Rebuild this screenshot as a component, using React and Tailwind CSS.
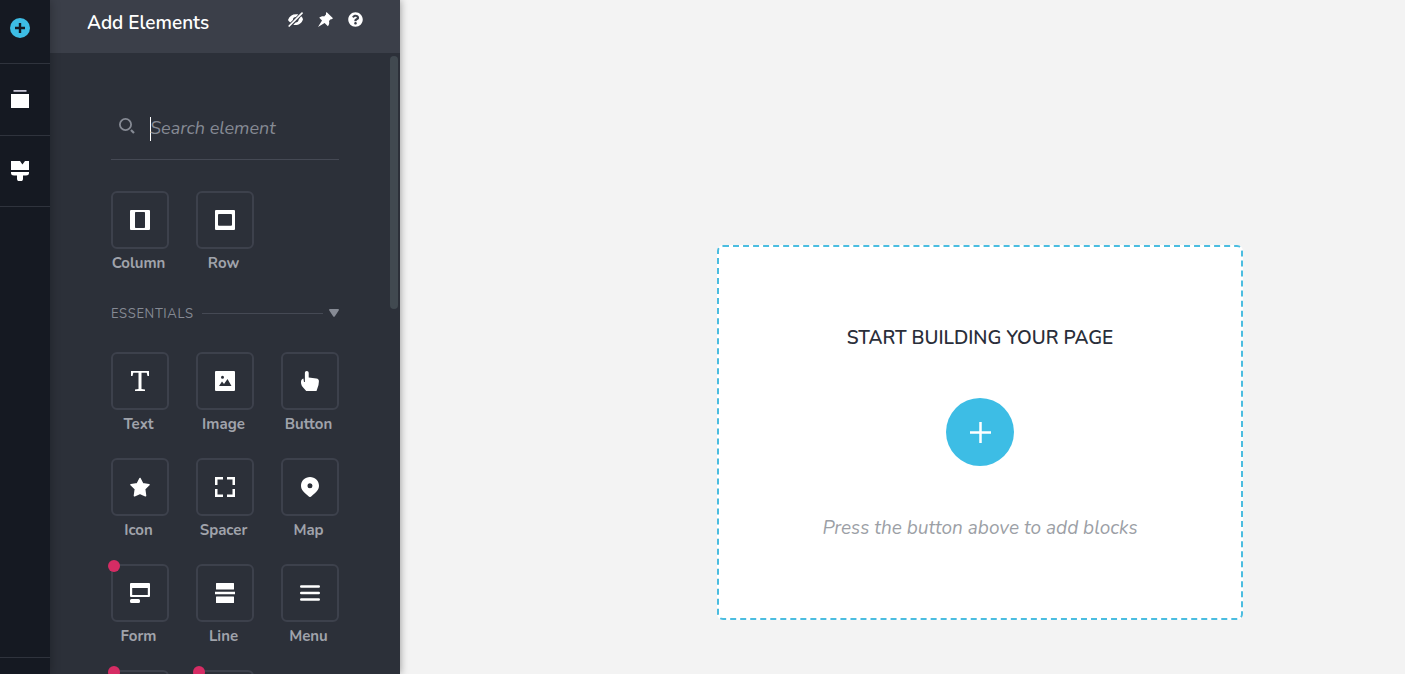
import React from 'react';
import { FaQuestionCircle } from 'react-icons/fa';

const icons = {
  column: (
    <path
      fillRule="evenodd"
      d="M1 0h18a1 1 0 0 1 1 1v18a1 1 0 0 1-1 1H1a1 1 0 0 1-1-1V1a1 1 0 0 1 1-1zm4.800 2a.8.8 0 0 0-.8.8v14.400a.8.8 0 0 0 .8.8h8.400a.8.8 0 0 0 .8-.8V2.800a.8.8 0 0 0-.8-.8z"
    />
  ),
  row: (
    <path
      fillRule="evenodd"
      d="M1 0h18a1 1 0 0 1 1 1v18a1 1 0 0 1-1 1H1a1 1 0 0 1-1-1V1a1 1 0 0 1 1-1zm3 4a1 1 0 0 0-1 1v9.800a1 1 0 0 0 1 1h12a1 1 0 0 0 1-1V5a1 1 0 0 0-1-1z"
    />
  ),
  text: (
    <path d="M1 0h18v5h-1.500l-.8-3.200h-5.200V18l3.500.6V20H5v-1.400l3.500-.6V1.800H3.300L2.500 5H1z" />
  ),
  image: (
    <path
      fillRule="evenodd"
      d="M1 0h18a1 1 0 0 1 1 1v18a1 1 0 0 1-1 1H1a1 1 0 0 1-1-1V1a1 1 0 0 1 1-1zm6.500 4.800a1.500 1.500 0 1 0 0 3 1.500 1.500 0 0 0 0-3zM4 15h12.500l-4-7-3.500 5-2-2.500z"
    />
  ),
  button: (
    <path d="M6.800 0C8 0 8.700.8 8.700 2v4.600l7.600.9c1.900.3 2.700 1.300 2.600 3l-.4 3.500-2 6H6.200L2.300 15.500C1.400 14 1 12.600 1 11c0-1.700.9-3.200 2.400-3.400L4 11h.9V2C4.900.8 5.600 0 6.800 0z" />
  ),
  icon: (
    <path
      strokeWidth="1.600"
      stroke="currentColor"
      strokeLinejoin="round"
      d="M10 1.500l2.700 5.300 6.300.9-4.400 4.300.9 6.700-5.500-2.500-5.500 2.500.9-6.700L1 7.700l6.300-.9z"
    />
  ),
  spacer: (
    <path d="M0 0h8v2.500H2.500V8H0zM12 0h8v8h-2.500V2.500H12zM0 12h2.500v5.500H8V20H0zM17.500 12H20v8h-8v-2.500h5.500z" />
  ),
  map: (
    <path
      fillRule="evenodd"
      d="M10 0c5 0 9 3.800 9 8.700 0 4.300-3.300 6.800-7.800 10.800a1.800 1.800 0 0 1-2.400 0C4.300 15.500 1 13 1 8.700 1 3.800 5 0 10 0zm0 6.300a2.500 2.500 0 1 0 0 5 2.500 2.500 0 0 0 0-5z"
    />
  ),
  form: (
    <path
      fillRule="evenodd"
      d="M1 0h18a1 1 0 0 1 1 1v12a1 1 0 0 1-1 1H1a1 1 0 0 1-1-1V1a1 1 0 0 1 1-1zm1.200 5v7h15.600V5zM1.500 16h7a1.500 1.500 0 0 1 1.500 1.500v1a1.500 1.500 0 0 1-1.500 1.500h-7A1.500 1.500 0 0 1 0 18.500v-1A1.500 1.500 0 0 1 1.500 16z"
    />
  ),
  line: (
    <path d="M1.500 0h17a.5.5 0 0 1 .5.500V6a.5.5 0 0 1-.5.500h-17A.5.5 0 0 1 1 6V.5a.5.5 0 0 1 .5-.5zM0 8.800h20v2.400H0zM1.500 13.500h17a.5.5 0 0 1 .5.5v5.500a.5.5 0 0 1-.5.500h-17a.5.5 0 0 1-.5-.5V14a.5.5 0 0 1 .5-.5z" />
  ),
  menu: (
    <path
      stroke="currentColor"
      strokeWidth="2.400"
      strokeLinecap="round"
      d="M1.200 3.500h17.600M1.200 10h17.600M1.200 16.500h17.600"
    />
  ),
};

const layoutItems = [
  { name: 'Column', icon: 'column' },
  { name: 'Row', icon: 'row' },
];

const essentials = [
  { name: 'Text', icon: 'text' },
  { name: 'Image', icon: 'image' },
  { name: 'Button', icon: 'button' },
  { name: 'Icon', icon: 'icon' },
  { name: 'Spacer', icon: 'spacer' },
  { name: 'Map', icon: 'map' },
  { name: 'Form', icon: 'form', pro: true },
  { name: 'Line', icon: 'line' },
  { name: 'Menu', icon: 'menu' },
  { icon: 'form', pro: true },
  { icon: 'line', pro: true },
];

const ElementTile = ({ item }) => (
  <button type="button" className="flex w-[58px] flex-col items-center gap-1">
    <span className="relative flex h-[58px] w-[58px] items-center justify-center rounded-md border-2 border-[#3d414c] text-white">
      <svg className="h-5 w-5" viewBox="0 0 20 20" fill="currentColor" aria-hidden="true">
        {icons[item.icon]}
      </svg>
      {item.pro && (
        <span className="absolute -left-[5px] -top-[6px] h-3 w-3 rounded-full bg-[#d62c64]" />
      )}
    </span>
    <span className="h-5 pr-[3px] text-[15px] leading-5 font-bold whitespace-nowrap text-[#a0a3ab]">
      {item.name}
    </span>
  </button>
);

const Rail = () => (
  <nav className="relative z-20 flex w-[50px] shrink-0 flex-col bg-[#151922] text-white shadow-[0_0_10px_rgba(0,0,0,0.3)]">
    <button
      type="button"
      aria-label="Add element"
      className="flex h-16 items-center border-b border-[#2f333d] pb-2 pl-[10px]"
    >
      <svg className="h-5 w-5" viewBox="0 0 20 20" aria-hidden="true">
        <circle cx="10" cy="10" r="10" fill="#3dbde5" />
        <path d="M10 5v10M5 10h10" stroke="#151922" strokeWidth="2.400" />
      </svg>
    </button>
    <button
      type="button"
      aria-label="Templates"
      className="flex h-[72px] items-center border-b border-[#2f333d] pl-[10px]"
    >
      <svg className="h-5 w-5" viewBox="0 0 20 20" fill="currentColor" aria-hidden="true">
        <path d="M3.500 0h13v1.800h-13z" fill="#c9c6d6" />
        <path d="M1 4h18v14H1z" />
      </svg>
    </button>
    <button
      type="button"
      aria-label="Styling"
      className="flex h-[71px] items-center border-b border-[#2f333d] pl-[10px]"
    >
      <svg className="h-5 w-5" viewBox="0 0 20 20" fill="currentColor" aria-hidden="true">
        <path d="M1 0h9l2.400 3.500L15 0h4v9H1z" />
        <path d="M1 11h18v1c0 1.700-1.200 2.500-3 2.500h-3V18a3 2.300 0 0 1-6 0v-3.500H4c-1.800 0-3-.8-3-2.500z" />
      </svg>
    </button>
    <div className="mt-auto h-[17px] border-t border-[#2f333d]" />
  </nav>
);

const PanelHeader = () => (
  <header className="flex h-[53px] shrink-0 justify-between bg-[#3b3f49] px-[37px] text-white">
    <h1 className="pt-[11px] text-[19px] leading-6 font-semibold">Add Elements</h1>
    <div className="flex items-start gap-[15px] pt-3">
      <button type="button" aria-label="Hide elements">
        <svg className="h-[15px] w-[15px]" viewBox="0 0 15 15" fill="currentColor" aria-hidden="true">
          <path d="M0 8C1.300 4.200 4.300 2.200 8 2.200c.9 0 1.600.1 2.300.3L7.900 4.900C6 4.900 4.900 6 4.900 7.900L2.300 10.600C1.200 9.800.4 9 0 8z" />
          <path d="M13.100 4.300c.9.800 1.600 1.800 1.900 2.900-1 3.700-4 5.800-7.800 5.800-.7 0-1.300-.1-1.900-.3l2.300-2.300c1.700 0 2.900-1.100 3.100-3z" />
          <path d="M1.200 14L14 1.200" stroke="currentColor" strokeWidth="1.700" strokeLinecap="round" />
        </svg>
      </button>
      <button type="button" aria-label="Pin panel">
        <svg className="h-[15px] w-[15px]" viewBox="0 0 15 15" fill="currentColor" aria-hidden="true">
          <path d="M8.500 0L15 6.200l-1.300 1h-1L11 9c.5 2 .2 3.700-1.100 5.300L6.600 11.100 0 15l4-6.500L1.300 5.800C2.700 4.500 4.300 4 6.100 4.400l1.900-1.900V1z" />
        </svg>
      </button>
      <button type="button" aria-label="Help">
        <FaQuestionCircle className="h-[15px] w-[15px]" />
      </button>
    </div>
  </header>
);

const Panel = () => (
  <aside className="relative z-10 flex w-[350px] shrink-0 flex-col bg-[#2c3039] shadow-[0_0_8px_rgba(0,0,0,0.4)]">
    <PanelHeader />
    <div className="relative min-h-0 flex-1 overflow-hidden px-[61px]">
      <label className="mt-[43px] flex h-16 items-center gap-[15px] border-b border-[#454954] pl-2">
        <svg className="mb-1 h-4 w-4 text-[#868a94]" viewBox="0 0 16 16" fill="none" stroke="currentColor" strokeWidth="1.800" aria-hidden="true">
          <circle cx="6.500" cy="6.500" r="5.600" />
          <path d="M12 12l3 3" strokeWidth="2.200" />
        </svg>
        <span className="flex min-w-0 flex-1 items-center pt-0.5">
          <span className="-mr-px h-6 w-px shrink-0 bg-white" />
          <input
            type="text"
            aria-label="Search element"
            placeholder="Search element"
            className="h-6 w-full min-w-0 bg-transparent text-[18px] text-white italic outline-none placeholder:text-[#868a94]"
          />
        </span>
      </label>

      <div className="mt-[31px] grid grid-cols-3 gap-x-[27px]">
        {layoutItems.map((item) => (
          <ElementTile key={item.name} item={item} />
        ))}
      </div>

      <button type="button" className="mt-[30px] flex h-5 w-full items-center text-[#868a94]">
        <span className="pt-0.5 text-[13px] leading-5 tracking-wider">ESSENTIALS</span>
        <span className="mr-1.5 ml-2 h-px flex-1 bg-[#454954]" />
        <svg className="h-2 w-[10px]" viewBox="0 0 10 8" fill="currentColor" aria-hidden="true">
          <path d="M1 0h8c1 0 1.200.8.700 1.500L5.900 7.300c-.5.700-1.300.7-1.800 0L.3 1.500C-.2.800 0 0 1 0z" />
        </svg>
      </button>

      <div className="mt-[29px] grid grid-cols-3 gap-x-[27px] gap-y-6">
        {essentials.map((item, index) => (
          <ElementTile key={index} item={item} />
        ))}
      </div>

      <div className="absolute top-[3px] right-[2px] h-[253px] w-2 rounded-full bg-[#414950]" />
    </div>
  </aside>
);

const App = () => {
  return (
    <div className="flex h-screen overflow-hidden bg-[#f3f3f3] font-['Nunito','Lato',sans-serif]">
      <Rail />
      <Panel />
      <main className="flex flex-1 items-start justify-center pt-[245px] pl-[155px]">
        <section className="flex w-[526px] flex-col items-center rounded-md border-2 border-dashed border-[#4bbde0] bg-white pt-[79px] pb-[78px]">
          <h2 className="text-[19px] leading-6 font-semibold text-[#2a2e3a]">
            START BUILDING YOUR PAGE
          </h2>
          <button
            type="button"
            aria-label="Add block"
            className="mt-12 flex h-[68px] w-[68px] items-center justify-center rounded-full bg-[#3dbde5]"
          >
            <svg className="h-[21px] w-[21px]" viewBox="0 0 21 21" stroke="white" strokeWidth="2.500" aria-hidden="true">
              <path d="M10.500 0v21M0 10.500h21" />
            </svg>
          </button>
          <p className="mt-[50px] text-[19px] leading-6 text-[#9c9fa6] italic">
            Press the button above to add blocks
          </p>
        </section>
      </main>
    </div>
  );
};

export default App;
